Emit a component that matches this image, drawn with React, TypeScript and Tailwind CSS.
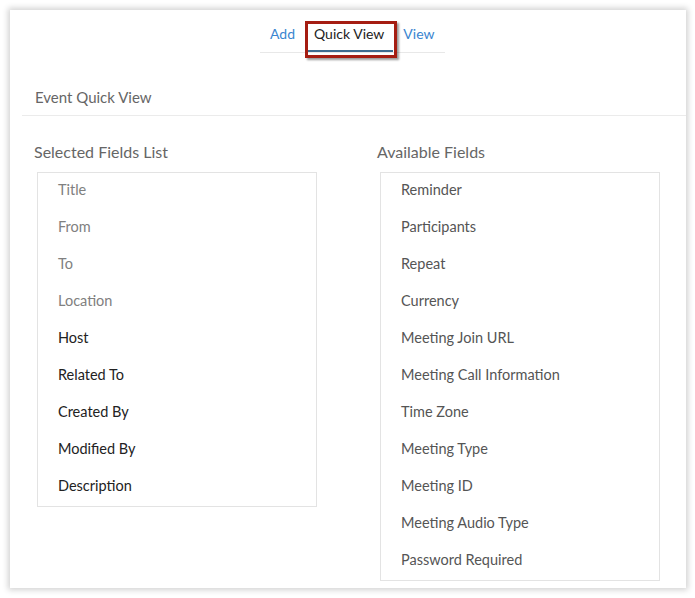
import React from 'react';

const selected = [
  { label: 'Title', locked: true },
  { label: 'From', locked: true },
  { label: 'To', locked: true },
  { label: 'Location', locked: true },
  { label: 'Host', locked: false },
  { label: 'Related To', locked: false },
  { label: 'Created By', locked: false },
  { label: 'Modified By', locked: false },
  { label: 'Description', locked: false },
];

const available = [
  'Reminder',
  'Participants',
  'Repeat',
  'Currency',
  'Meeting Join URL',
  'Meeting Call Information',
  'Time Zone',
  'Meeting Type',
  'Meeting ID',
  'Meeting Audio Type',
  'Password Required',
];

export default function App() {
  return (
    <div className="min-h-screen bg-white p-[10px] pr-[9px]" style={{ fontFamily: 'Lato, "Open Sans", sans-serif' }}>
      <div className="relative h-[578px] w-[676px] bg-white shadow-[0_0_6px_2px_rgba(0,0,0,0.18)]">
        {/* tabs */}
        <div className="flex pt-[13px] pl-[250px]">
          <div className="flex h-[30px] items-start border-b border-[#e8e8e8] text-[14px] leading-5">
            <button className="px-[10px] pt-[1px] text-[#3a85d0]">Add</button>
            <button className="relative flex h-full items-start px-[9px] pt-[1px] text-[#222]">
              Quick View
              <span className="absolute inset-x-0 bottom-0 h-[2px] bg-[#3d6b8f]" />
            </button>
            <button className="px-[10px] pt-[1px] text-[#3a85d0]">View</button>
          </div>
        </div>
        {/* highlight box */}
        <div className="absolute left-[295px] top-[11px] h-[37px] w-[92px] border-[3px] border-[#a51d12] shadow-[2px_2px_2px_rgba(0,0,0,0.4)]" />

        <div className="ml-[12px] mt-[33px] border-b border-[#ebebeb] pb-[7px] pl-[13px] text-[15px] leading-[22px] text-[#666]">
          Event Quick View
        </div>

        <div className="flex pt-[24px]">
          <div className="pl-[24px]">
            <div className="text-[16px] leading-[24px] text-[#666]">Selected Fields List</div>
            <div className="ml-[3px] mt-[8px] w-[280px] border border-[#e3e3e3]">
              {selected.map((f) => (
                <div
                  key={f.label}
                  className={`flex h-[37px] items-center pb-[4px] pl-[20px] text-[14.5px] ${f.locked ? 'text-[#808080]' : 'text-[#222]'}`}
                >
                  {f.label}
                </div>
              ))}
            </div>
          </div>
          <div className="pl-[60px]">
            <div className="text-[16px] leading-[24px] text-[#666]">Available Fields</div>
            <div className="ml-[3px] mt-[8px] w-[280px] border border-[#e3e3e3]">
              {available.map((f) => (
                <div key={f} className="flex h-[37px] items-center pb-[4px] pl-[20px] text-[14.5px] text-[#555]">
                  {f}
                </div>
              ))}
            </div>
          </div>
        </div>
      </div>
    </div>
  );
}
